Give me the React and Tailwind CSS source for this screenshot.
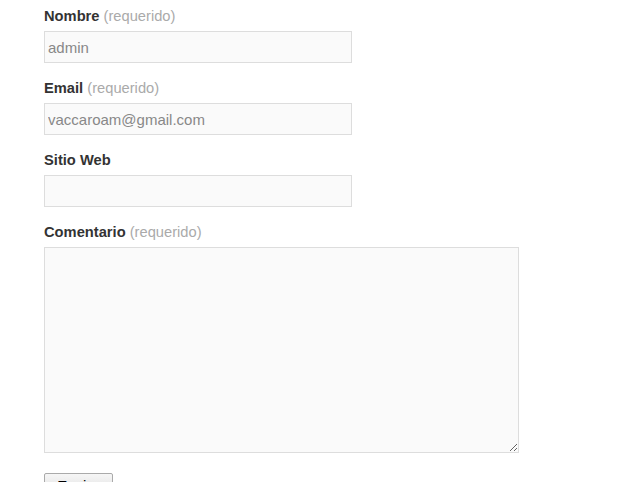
export default function App() {
  const fields = [
    { label: 'Nombre', req: true, value: 'admin' },
    { label: 'Email', req: true, value: 'vaccaroam@gmail.com' },
    { label: 'Sitio Web', req: false, value: '' },
  ]
  return (
    <div className="min-h-screen bg-white pl-[44px] pt-[5px] text-[14.7px] text-[#333]" style={{ fontFamily: '"Liberation Sans", Arial, sans-serif' }}>
      {fields.map(f => (
        <div key={f.label} className="mb-[14px]">
          <div className="mb-[4px] leading-[22px]">
            <span className="font-bold">{f.label}</span>
            {f.req && <span className="text-[#aaa]"> (requerido)</span>}
          </div>
          <input
            readOnly
            value={f.value}
            className="block h-[32px] w-[308px] border border-[#ddd] bg-[#fafafa] px-[3px] text-[15px] text-[#888] outline-none"
          />
        </div>
      ))}
      <div className="mb-[20px]">
        <div className="mb-[4px] leading-[22px]">
          <span className="font-bold">Comentario</span>
          <span className="text-[#aaa]"> (requerido)</span>
        </div>
        <textarea className="block h-[206px] w-[475px] border border-[#ddd] bg-[#fafafa] p-[3px] outline-none" />
      </div>
      <button className="h-[24px] w-[69px] rounded-[2px] border border-[#aaa] bg-gradient-to-b from-[#f6f6f6] to-[#ddd] pt-[2px] text-[15px] leading-[20px] text-black">
        Enviar
      </button>
    </div>
  )
}
